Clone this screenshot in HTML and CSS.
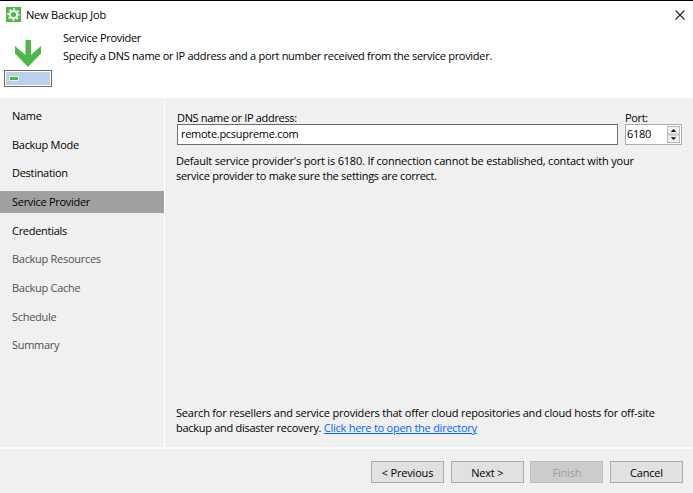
FILE: index.html
```html
<!DOCTYPE html>
<html lang="en">
<head>
<meta charset="utf-8">
<title>New Backup Job</title>
<link rel="stylesheet" href="styles.css">
</head>
<body>
<div class="window">
  <header class="header">
    <div class="titlebar">
      <svg class="app-icon" width="15" height="15" viewBox="0 0 15 15">
        <rect width="15" height="15" fill="#4db848"/>
        <circle cx="7.5" cy="7.5" r="5.3" fill="none" stroke="#fff" stroke-width="1.8" stroke-dasharray="2.08 2.083" stroke-dashoffset="1.04"/>
        <circle cx="7.5" cy="7.5" r="3.6" fill="none" stroke="#fff" stroke-width="2"/>
      </svg>
      <span class="title">New Backup Job</span>
      <svg class="close" width="10" height="10" viewBox="0 0 10 10"><path d="M.5 .5l9 9M9.5 .5l-9 9" stroke="#222" stroke-width="1.1"/></svg>
    </div>
    <div class="intro">
      <svg class="hero" width="48" height="48" viewBox="0 0 48 48">
        <path d="M21.500 0h5.500v15l10-9v7.500L24 27 11 13.500V6l10.500 9z" fill="#4db848"/>
        <rect x=".5" y="30.500" width="47" height="16" fill="#fff" stroke="#6b6b6b"/>
        <rect x="2" y="32" width="44" height="13" fill="#b9d1ec"/>
        <rect x="5.500" y="36.500" width="9" height="4" fill="#4db848" stroke="#e6f3e6"/>
      </svg>
      <div class="intro-text">
        <div class="heading">Service Provider</div>
        <div class="subtitle">Specify a DNS name or IP address and a port number received from the service provider.</div>
      </div>
    </div>
  </header>
  <main class="body">
    <nav class="steps">
      <div class="step">Name</div>
      <div class="step">Backup Mode</div>
      <div class="step">Destination</div>
      <div class="step current">Service Provider</div>
      <div class="step">Credentials</div>
      <div class="step pending">Backup Resources</div>
      <div class="step pending">Backup Cache</div>
      <div class="step pending">Schedule</div>
      <div class="step pending">Summary</div>
    </nav>
    <section class="content">
      <div class="fields">
        <div class="field host"><label>DNS name or IP address:</label><div class="input">remote.pcsupreme.com</div></div>
        <div class="field port"><label>Port:</label>
          <div class="input"><span>6180</span>
            <svg class="spinner" width="13" height="17" viewBox="0 0 13 17">
              <rect x=".5" y=".5" width="12" height="7.5" fill="#f0f0f0" stroke="#b8b8b8"/>
              <rect x=".5" y="9" width="12" height="7.5" fill="#f0f0f0" stroke="#b8b8b8"/>
              <path d="M3.800 6L6.500 3 9.200 6zM3.800 11.200h5.400L6.500 14z" fill="#111"/>
            </svg>
          </div>
        </div>
      </div>
      <p class="note"><span class="wide-line">Default service provider's port is 6180. If connection cannot be established, contact with your</span><br>service provider to make sure the settings are correct.</p>
      <p class="note search"><span class="wide-line">Search for resellers and service providers that offer cloud repositories and cloud hosts for off-site</span><br>backup and disaster recovery. <a class="link">Click here to open the directory</a></p>
    </section>
  </main>
  <footer class="footer">
    <button>&lt; Previous</button>
    <button>Next &gt;</button>
    <button class="disabled">Finish</button>
    <button>Cancel</button>
  </footer>
</div>
</body>
</html>
```
FILE: styles.css
```css
* { box-sizing: border-box; }
body { margin: 0; font: 11px/15px "Open Sans", "Noto Sans", sans-serif; letter-spacing: -0.29px; color: #000; }
.window { width: 693px; height: 493px; display: flex; flex-direction: column; background: #f0f0f0; border-top: 1px solid #000; white-space: nowrap; overflow: hidden; }
.header { height: 97px; background: #fff; }
.titlebar { height: 27px; display: flex; align-items: center; padding: 0 8px 0 6px; }
.title { margin-left: 5px; padding-bottom: 1px; letter-spacing: -0.2px; }
.close { margin-left: auto; }
.intro { display: flex; padding: 0 0 0 4px; }
.hero { margin-top: 12px; }
.intro-text { margin-left: 11px; padding-top: 1px; line-height: 18px; }
.body { height: 349px; display: flex; }
.steps { width: 165px; padding-top: 7px; border-right: 1px solid #fff; }
.step { height: 22px; line-height: 22px; padding-left: 12px; margin-bottom: 6.67px; }
.current { background: #a0a0a0; }
.pending { color: #505050; }
.content { flex: 1; display: flex; flex-direction: column; padding: 13px 11px 12px 12px; }
.fields { display: flex; gap: 7px; }
.field label { display: block; height: 13px; line-height: 13px; letter-spacing: -0.33px; }
.host { width: 441px; }
.port { width: 57px; }
.input { height: 21px; line-height: 18px; background: #fff; border: 1px solid #6d6d6d; padding-left: 3px; }
.port .input { display: flex; justify-content: space-between; border-color: #ababab; padding: 1px 1px 0 1px; line-height: 15px; }
.note { margin: 8px 0 0 -1px; letter-spacing: -0.28px; }
.wide-line { letter-spacing: -0.19px; }
.search { margin-top: auto; }
.link { color: #0066ff; letter-spacing: -0.25px; text-decoration: underline; }
.footer { flex: 1; border-top: 2px solid #fcfcfc; display: flex; justify-content: flex-end; gap: 6.67px; padding: 12px 10px 0 0; }
.footer button { width: 73px; height: 22px; padding: 0; font: inherit; letter-spacing: -0.2px; color: #000; background: #e1e1e1; border: 1px solid #adadad; }
.footer .disabled { background: #ccc; border-color: #bfbfbf; color: #9c9c9c; }
```
